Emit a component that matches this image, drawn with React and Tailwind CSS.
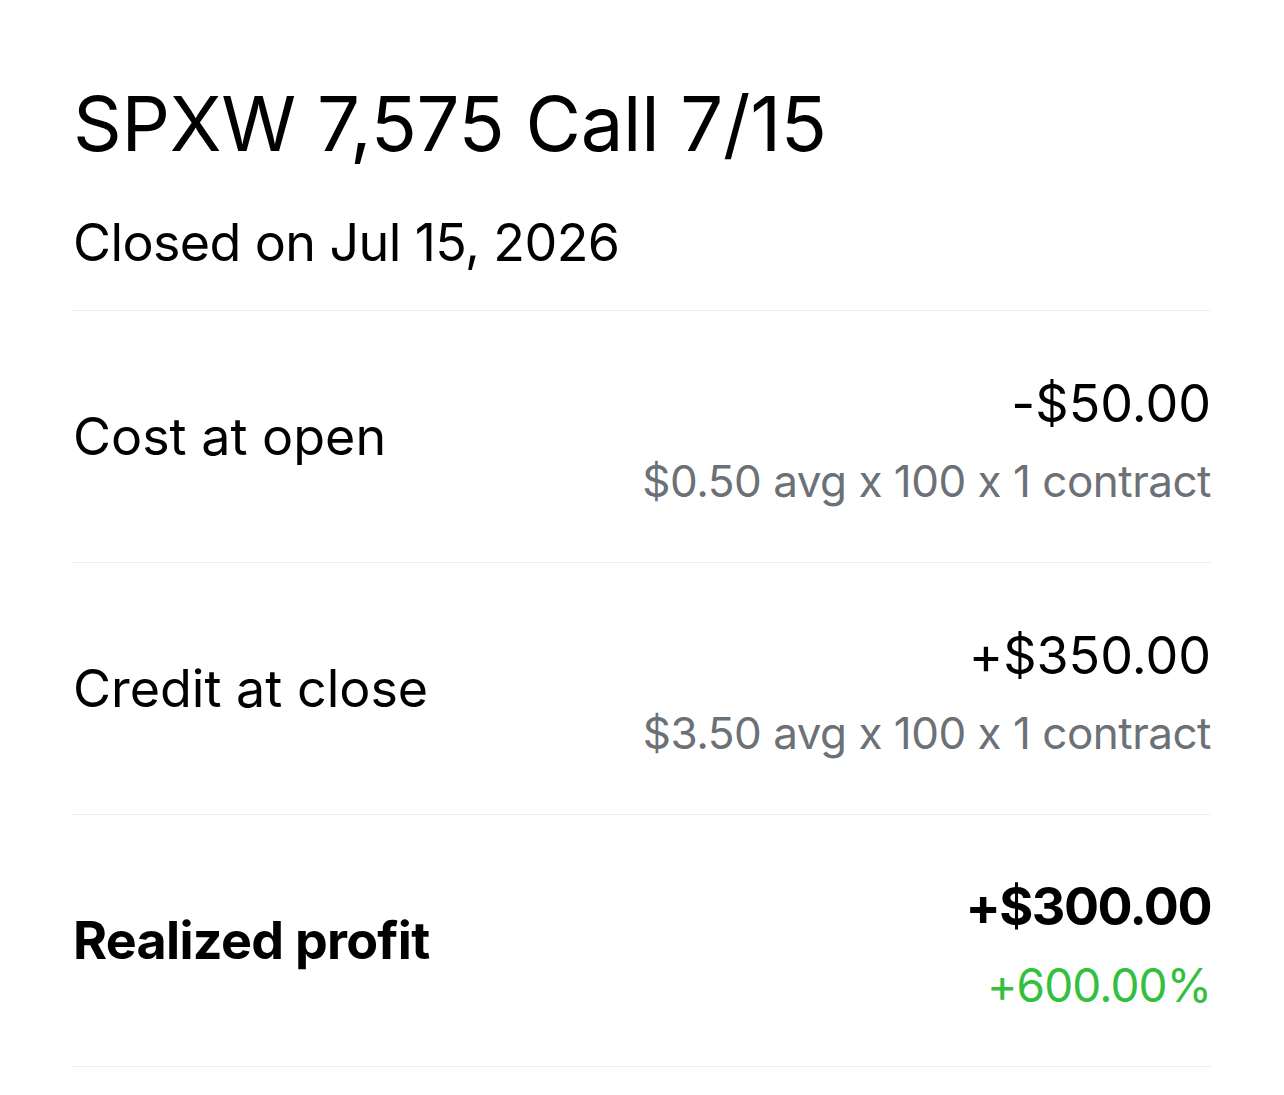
const rows = [
  { label: "Cost at open", value: "-$50.00", sub: "$0.50 avg x 100 x 1 contract" },
  { label: "Credit at close", value: "+$350.00", sub: "$3.50 avg x 100 x 1 contract" },
  { label: "Realized profit", value: "+$300.00", sub: "+600.00%", bold: true },
];

export default function App() {
  return (
    <div
      className="min-h-screen bg-white px-[73px] text-black [font-feature-settings:'calt'_0]"
      style={{ fontFamily: "Inter, 'Noto Sans', sans-serif" }}
    >
      <div className="border-b border-[#ececec] pt-[85px] pb-[41px]">
        <h1 className="text-[76px] leading-none font-normal tracking-[-0.3px]">SPXW 7,575 Call 7/15</h1>
        <p className="mt-[56px] text-[52px] leading-none tracking-[-0.6px]">Closed on Jul 15, 2026</p>
      </div>
      {rows.map((r) => (
        <div key={r.label} className="flex h-[252px] items-center justify-between border-b border-[#ececec]">
          <span className={`text-[52px] leading-none ${r.bold ? "font-bold tracking-[-0.7px]" : ""}`}>{r.label}</span>
          <div className="flex flex-col items-end pt-[8px]">
            <span className={`text-[52px] leading-none ${r.bold ? "font-bold tracking-[-1.5px]" : ""}`}>{r.value}</span>
            <span
              className={`mt-[29px] leading-none ${
                r.bold ? "text-[46px] tracking-[-0.9px] text-[#34c03f]" : "text-[44px] tracking-[-0.5px] text-[#6c7177]"
              }`}
            >
              {r.sub}
            </span>
          </div>
        </div>
      ))}
    </div>
  );
}
